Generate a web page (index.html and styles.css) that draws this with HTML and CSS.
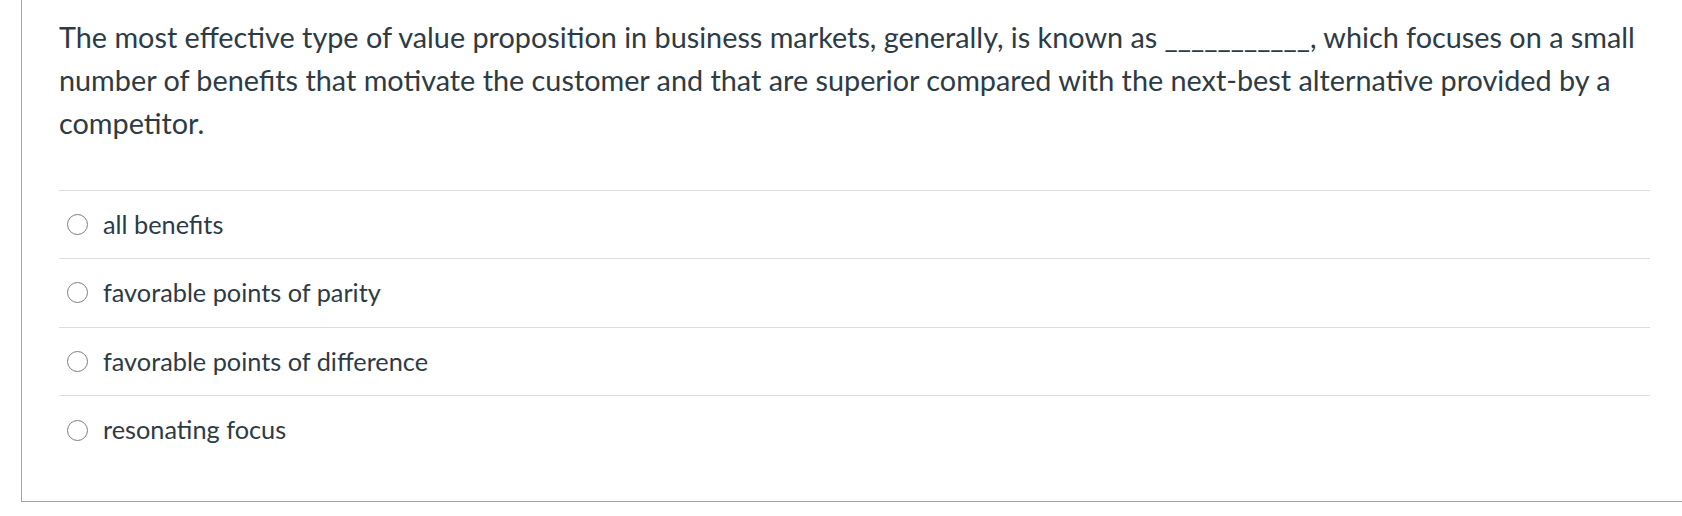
FILE: index.html
```html
<!DOCTYPE html>
<html>
<head>
<meta charset="utf-8">
<link rel="stylesheet" href="styles.css">
</head>
<body>
<div class="page">
  <div class="question">
    <div class="question-text">The most effective type of value proposition in business markets, generally, is known as ___________, which focuses on a small number of benefits that motivate the customer and that are superior compared with the next-best alternative provided by a competitor.</div>
    <div class="answers">
      <label class="answer"><span class="radio"></span><span class="label">all benefits</span></label>
      <label class="answer"><span class="radio"></span><span class="label">favorable points of parity</span></label>
      <label class="answer"><span class="radio"></span><span class="label">favorable points of difference</span></label>
      <label class="answer"><span class="radio"></span><span class="label">resonating focus</span></label>
    </div>
  </div>
</div>
</body>
</html>
```
FILE: styles.css
```css
html, body {
  margin: 0;
  padding: 0;
  background: #fff;
  overflow: hidden;
}
.page {
  width: 1682px;
  height: 516px;
  overflow: hidden;
}
.question {
  margin-left: 21px;
  width: 1680px;
  box-sizing: border-box;
  border-left: 1px solid #a5a5a5;
  border-bottom: 1px solid #a5a5a5;
  padding: 16px 51px 37px 37px;
  font-family: Lato, "Open Sans", sans-serif;
  color: #2d3b45;
}
.question-text {
  font-size: 28.8px;
  line-height: 1.5;
  margin-bottom: 44px;
}
.answers {
  display: flex;
  flex-direction: column;
}
.answer {
  display: flex;
  align-items: center;
  border-top: 1px solid #dcdfe2;
  padding: 12px 0;
  font-size: 25.3px;
  line-height: 43.6px;
}
.radio {
  width: 19px;
  height: 19px;
  border: 1.5px solid #7b7d80;
  border-radius: 50%;
  margin-left: 8px;
  margin-right: 15px;
  flex: none;
}
```
